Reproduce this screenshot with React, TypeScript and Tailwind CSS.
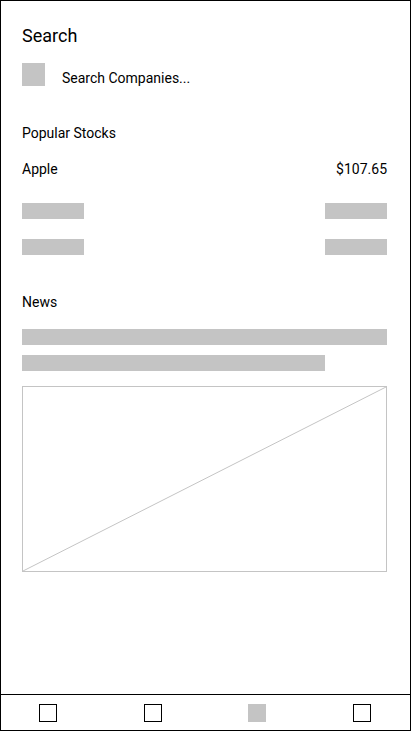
import React from "react";

export default function App() {
  return (
    <div
      className="w-[411px] h-[731px] border border-black bg-white flex flex-col text-black box-border"
      style={{ fontFamily: "Roboto, 'Noto Sans', sans-serif" }}
    >
      <div className="flex-1 flex flex-col pl-[21px] pr-[23px]">
        <h1 className="mt-[25px] text-[18px] leading-[20px] font-normal">Search</h1>

        <div className="mt-[17px] flex items-start">
          <div className="w-[23px] h-[23px] bg-[#c4c4c4]" />
          <span className="ml-[17px] mt-[6.5px] text-[14px] leading-[16px]">Search Companies...</span>
        </div>

        <h2 className="mt-[38.5px] text-[14px] leading-[16px] font-normal">Popular Stocks</h2>

        <div className="mt-[20px] flex justify-between text-[14px] leading-[16px]">
          <span>Apple</span>
          <span>$107.65</span>
        </div>

        <div className="mt-[26.5px] flex justify-between">
          <div className="w-[62px] h-[16px] bg-[#c4c4c4]" />
          <div className="w-[62px] h-[16px] bg-[#c4c4c4]" />
        </div>
        <div className="mt-[20px] flex justify-between">
          <div className="w-[62px] h-[16px] bg-[#c4c4c4]" />
          <div className="w-[62px] h-[16px] bg-[#c4c4c4]" />
        </div>

        <h2 className="mt-[38.5px] text-[14px] leading-[16px] font-normal">News</h2>

        <div className="mt-[19.5px] w-full h-[16px] bg-[#c4c4c4]" />
        <div className="mt-[10px] w-[303px] h-[16px] bg-[#c4c4c4]" />

        <div className="mt-[15px] relative w-full h-[186px] border border-[#c4c4c4]">
          <svg
            className="absolute inset-0 w-full h-full"
            viewBox="0 0 100 100"
            preserveAspectRatio="none"
          >
            <line
              x1="0"
              y1="100"
              x2="100"
              y2="0"
              stroke="#c4c4c4"
              strokeWidth="1"
              vectorEffect="non-scaling-stroke"
            />
          </svg>
        </div>
      </div>

      <nav className="h-[36px] border-t border-black flex items-center justify-between pl-[38px] pr-[39px]">
        <div className="w-[18px] h-[18px] border border-black" />
        <div className="w-[18px] h-[18px] border border-black" />
        <div className="w-[18px] h-[18px] bg-[#c4c4c4]" />
        <div className="w-[18px] h-[18px] border border-black" />
      </nav>
    </div>
  );
}
